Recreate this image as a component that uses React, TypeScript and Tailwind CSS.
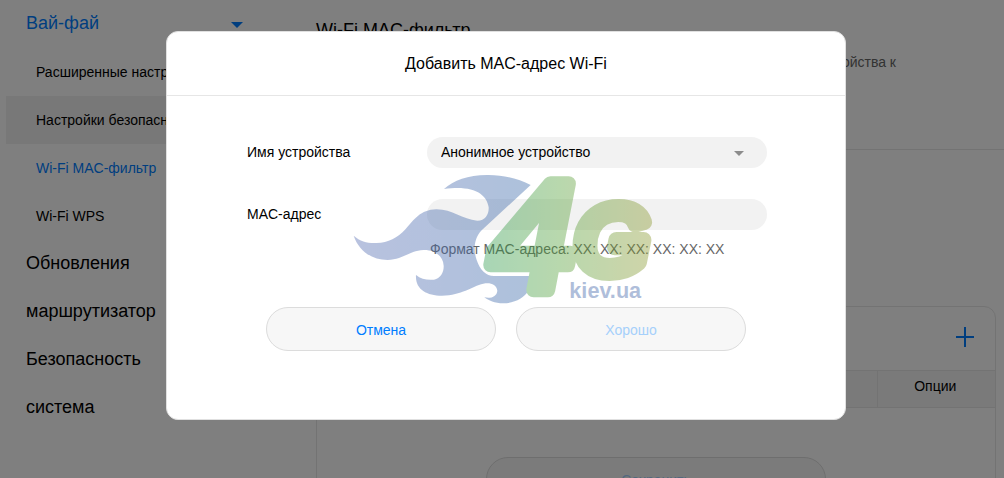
import React, { useState } from 'react';

interface SubItem {
  label: string;
  state?: 'active' | 'hover';
}

const wifiItems: SubItem[] = [
  { label: 'Расширенные настройки' },
  { label: 'Настройки безопасности', state: 'hover' },
  { label: 'Wi-Fi MAC-фильтр', state: 'active' },
  { label: 'Wi-Fi WPS' },
];

const sections = ['Обновления', 'маршрутизатор', 'Безопасность', 'система'];

const Sidebar: React.FC = () => (
  <nav className="w-[259px] shrink-0">
    <a href="#wifi" className="flex h-12 items-center justify-between pr-[22px] pb-0.5 pl-5 text-lg text-[#007dff]">
      Вай-фай
      <svg className="mt-1 h-[6px] w-3" viewBox="0 0 12 6" aria-hidden="true">
        <path d="M0 0H12L6 6Z" fill="currentColor" />
      </svg>
    </a>
    <ul>
      {wifiItems.map((item) => (
        <li key={item.label} className={item.state === 'hover' ? 'bg-[#f0f0f0]' : ''}>
          <a
            href="#item"
            className={`flex h-12 items-center pl-[30px] text-sm ${
              item.state === 'active' ? 'text-[#007dff]' : 'text-black'
            }`}
          >
            {item.label}
          </a>
        </li>
      ))}
    </ul>
    {sections.map((section) => (
      <a key={section} href="#section" className="flex h-12 items-center pb-0.5 pl-5 text-lg text-black">
        {section}
      </a>
    ))}
  </nav>
);

const FilterPage: React.FC = () => (
  <main className="ml-[51px] min-w-0 flex-1">
    <div className="h-[150px] border-b border-[#e6e6e6] pt-4">
      <h1 className="text-lg leading-7 text-black">Wi-Fi MAC-фильтр</h1>
      <p className="mt-2 w-[580px] text-right text-sm text-[#666]">
        Фильтрация позволяет разрешить или запретить подключение устройства к
      </p>
    </div>
    <section className="mt-[156px] mr-2 h-[300px] rounded-t-xl border border-[#e6e6e6]">
      <div className="flex h-[63px] items-center justify-end pr-5 pb-1">
        <button type="button" aria-label="Добавить" className="text-[#007dff]">
          <svg className="h-5 w-5" viewBox="0 0 20 20" aria-hidden="true">
            <path d="M10 0V20M1 10H19" stroke="currentColor" strokeWidth="2" />
          </svg>
        </button>
      </div>
      <table className="w-full table-fixed border-collapse text-sm text-black">
        <thead>
          <tr className="h-[37px] border-y border-[#e6e6e6] bg-[#f5f5f5]">
            <th className="font-normal">Имя устройства</th>
            <th className="font-normal">MAC-адрес</th>
            <th className="w-[118px] border-l border-[#e6e6e6] pr-0.5 pb-1.5 font-normal">Опции</th>
          </tr>
        </thead>
      </table>
      <div className="mt-[49px] flex justify-center">
        <button
          type="button"
          disabled
          className="h-11 w-[340px] rounded-full border border-[#dcdcdc] bg-[#f7f7f7] pt-0.5 text-sm text-[#a6d0fb]"
        >
          Сохранить
        </button>
      </div>
    </section>
  </main>
);

const BrandMark: React.FC = () => (
  <svg
    className="pointer-events-none absolute top-[141px] left-[183px] h-[132px] w-[300px] opacity-40"
    viewBox="30 24 900 396"
    overflow="visible"
    aria-hidden="true"
  >
    <defs>
      <linearGradient id="flame" gradientUnits="userSpaceOnUse" x1="41" y1="0" x2="572" y2="0">
        <stop offset="0" stopColor="#5068b0" />
        <stop offset="1" stopColor="#3566a8" />
      </linearGradient>
      <linearGradient id="leaf" gradientUnits="userSpaceOnUse" x1="426" y1="0" x2="940" y2="0">
        <stop offset="0" stopColor="#28994a" />
        <stop offset="0.45" stopColor="#509f35" />
        <stop offset="1" stopColor="#8a962a" />
      </linearGradient>
    </defs>
    <path
      d="M41 212C62 230 86 236 110 234C145 233 172 219 197 192C222 164 242 134 288 133C336 132 366 163 412 167C436 167 447 148 446 127C441 87 400 59 312 72C340 46 385 30 440 30C490 29 535 41 572 60L425 196C398 224 402 262 410 285C420 315 438 333 462 333H570C565 350 565 366 567 376C550 400 526 414 490 415C464 415 446 407 433 397C454 401 470 395 472 377C469 357 450 352 430 356C394 364 366 391 306 392C259 392 225 372 228 330C243 343 262 346 282 344C302 340 312 322 311 302C309 271 283 254 250 255C211 256 188 284 143 285C94 285 56 256 41 212Z"
      fill="url(#flame)"
    />
    <g fill="url(#leaf)" stroke="url(#leaf)" strokeLinejoin="round" fontStyle="italic">
      <text x="444" y="376" fontSize="436" strokeWidth="44" fontFamily="'DejaVu Sans', sans-serif">
        4
      </text>
      <text x="708" y="320" fontSize="278" strokeWidth="48" fontFamily="'Liberation Sans', Arial, sans-serif">
        G
      </text>
    </g>
    <text
      x="688"
      y="399"
      fontSize="65"
      fontWeight="700"
      fontFamily="'Liberation Sans', Arial, sans-serif"
      fill="#395fa5"
    >
      kiev.ua
    </text>
  </svg>
);

const AddMacDialog: React.FC = () => {
  const [device, setDevice] = useState('anonymous');
  const [mac, setMac] = useState('');

  return (
    <div
      role="dialog"
      aria-labelledby="dialog-title"
      className="relative w-full max-w-[680px] rounded-xl border border-[#e0e0e0] bg-white"
    >
      <h2 id="dialog-title" className="h-16 border-b border-[#e6e6e6] pt-5 text-center text-base leading-6 text-black">
        Добавить MAC-адрес Wi-Fi
      </h2>
      <form className="pt-[41px] pb-[68px]" onSubmit={(e) => e.preventDefault()}>
        <div className="flex items-center pl-20">
          <label htmlFor="device" className="w-[180px] shrink-0 pb-0.5 text-sm text-black">
            Имя устройства
          </label>
          <div className="relative w-[340px]">
            <select
              id="device"
              value={device}
              onChange={(e) => setDevice(e.target.value)}
              className="block h-[31px] w-full appearance-none rounded-full bg-[#f2f2f2] px-[14px] pb-0.5 text-sm text-black outline-none"
            >
              <option value="anonymous">Анонимное устройство</option>
            </select>
            <svg
              className="pointer-events-none absolute top-[14px] right-[23px] h-[5px] w-[10px]"
              viewBox="0 0 10 5"
              aria-hidden="true"
            >
              <path d="M0 0H10L5 5Z" fill="#8c8c8c" />
            </svg>
          </div>
        </div>
        <div className="mt-[31px] flex items-center pl-20">
          <label htmlFor="mac" className="w-[180px] shrink-0 pb-0.5 text-sm text-black">
            MAC-адрес
          </label>
          <input
            id="mac"
            type="text"
            value={mac}
            onChange={(e) => setMac(e.target.value)}
            className="h-[31px] w-[340px] rounded-full bg-[#f2f2f2] px-[14px] text-sm text-black outline-none"
          />
        </div>
        <p className="mt-[9px] ml-[263px] text-sm leading-5 text-[#666]">Формат MAC-адреса: XX: XX: XX: XX: XX: XX</p>
        <div className="mt-12 flex justify-center gap-5">
          <button
            type="button"
            className="h-11 w-[230px] rounded-full border border-[#dcdcdc] bg-[#f7f7f7] pt-0.5 text-sm text-[#007dff]"
          >
            Отмена
          </button>
          <button
            type="submit"
            disabled
            className="h-11 w-[230px] rounded-full border border-[#dcdcdc] bg-[#f7f7f7] pt-0.5 text-sm text-[#a6d0fb]"
          >
            Хорошо
          </button>
        </div>
      </form>
      <BrandMark />
    </div>
  );
};

const App: React.FC = () => (
  <div className="relative h-screen overflow-hidden bg-white font-['Liberation_Sans',Arial,sans-serif]">
    <div className="flex pl-[6px]">
      <Sidebar />
      <FilterPage />
    </div>
    <div className="absolute inset-0 flex items-start justify-center bg-black/50 pt-[31px] pl-2">
      <AddMacDialog />
    </div>
  </div>
);

export default App;
